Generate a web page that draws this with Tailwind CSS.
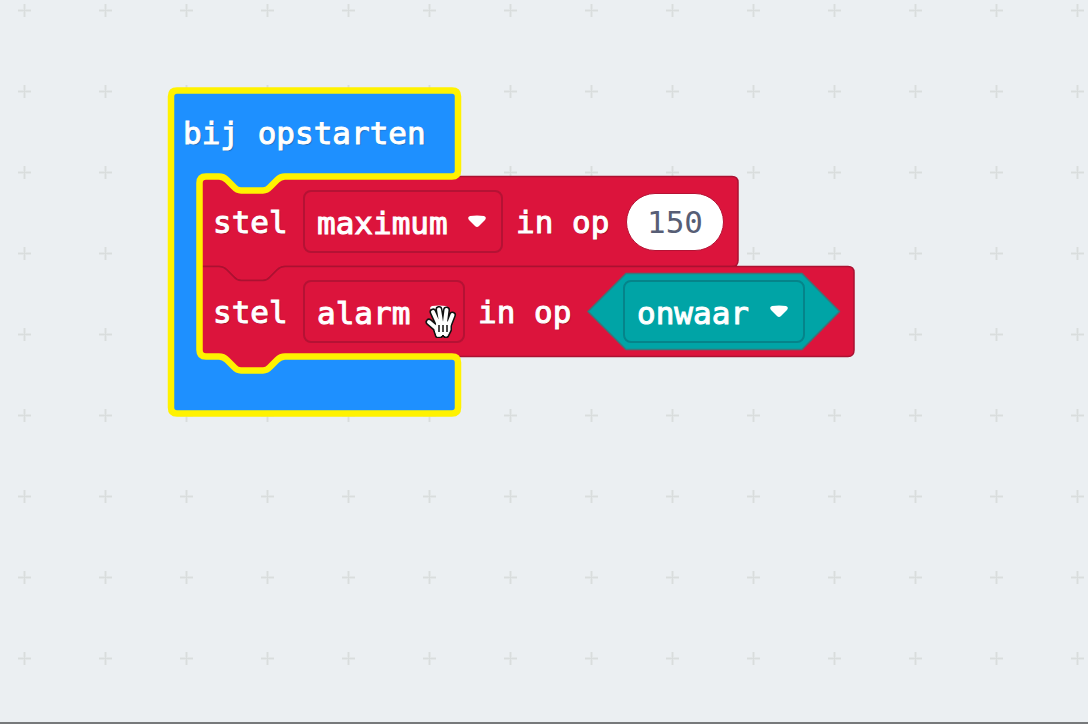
<!DOCTYPE html>
<html lang="nl">
<head>
<meta charset="utf-8">
<meta name="viewport" content="width=device-width, initial-scale=1">
<title>bij opstarten</title>
<script src="https://cdn.jsdelivr.net/npm/@tailwindcss/browser@4"></script>
</head>
<body class="bg-[#ebeff2]">
<main class="relative min-h-screen overflow-hidden border-b-2 border-[#77797b] font-['DejaVu_Sans_Mono',monospace] text-[31px] leading-9 text-white [-webkit-text-stroke:1px]">
  <!-- workspace grid -->
  <svg class="absolute inset-0 h-full w-full" aria-hidden="true">
    <defs>
      <pattern id="grid" width="81" height="81" patternUnits="userSpaceOnUse">
        <path d="M18 10.5h13M24.5 4v13" stroke="#e3e7e8" stroke-width="3"/>
        <path d="M18 10.5h13M24.5 4v13" stroke="#d9dddd" stroke-width="1"/>
      </pattern>
    </defs>
    <rect width="100%" height="100%" fill="url(#grid)"/>
  </svg>

  <section class="absolute left-[167px] top-[87px] w-[689px]" aria-label="bij opstarten">
    <!-- block outlines -->
    <svg class="absolute left-0 top-0" width="689" height="331" viewBox="167 87 689 331" fill="none" stroke-linejoin="round" aria-hidden="true">
      <path fill="#1e90ff" d="M177 90.500H452Q458 90.500 458 96.500V170.500Q458 176.500 452 176.500H300V200H200V356.500H452Q458 356.500 458 362.500V407.500Q458 413.500 452 413.500H177Q171 413.500 171 407.500V96.500Q171 90.500 177 90.500Z"/>
      <path fill="#dc143c" stroke="#ab1131" stroke-width="1.500" d="M207 176.500H219C223 176.500 225 178 227 180L234 187Q237 190.500 241 190.500H263Q267 190.500 270 187L277 180C279 178 281 176.500 285 176.500H732Q738 176.500 738 182.500V260.500Q738 266.500 732 266.500H285C281 266.500 279 268 277 270L270 277Q267 280.500 263 280.500H241Q237 280.500 234 277L227 270C225 268 223 266.500 219 266.500H200V183Q200 176.500 207 176.500Z"/>
      <path fill="#dc143c" stroke="#ab1131" stroke-width="1.500" d="M200 266.500H219C223 266.500 225 268 227 270L234 277Q237 280.500 241 280.500H263Q267 280.500 270 277L277 270C279 268 281 266.500 285 266.500H848Q854 266.500 854 272.500V350Q854 356.500 848 356.500H285C281 356.500 279 358 277 360L270 367Q267 370.500 263 370.500H241Q237 370.500 234 367L227 360C225 358 223 356.500 219 356.500H207Q200 356.500 200 350Z"/>
      <path stroke="#fff200" stroke-width="6.500" d="M177 90.500H452Q458 90.500 458 96.500V170.500Q458 176.500 452 176.500H285C281 176.500 279 178 277 180L270 187Q267 190.500 263 190.500H241Q237 190.500 234 187L227 180C225 178 223 176.500 219 176.500H206Q199.500 176.500 199.500 183V350Q199.500 356.500 206 356.500H219C223 356.500 225 358 227 360L234 367Q237 370.500 241 370.500H263Q267 370.500 270 367L277 360C279 358 281 356.500 285 356.500H452Q458 356.500 458 362.500V407.500Q458 413.500 452 413.500H177Q171 413.500 171 407.500V96.500Q171 90.500 177 90.500Z"/>
      <path fill="#00a4a6" stroke="#3d7479" stroke-width="1.500" d="M588 311.500L626 273.500H802L839.500 311.500L802 349.500H626Z"/>
    </svg>

    <div class="relative flex flex-col whitespace-nowrap [text-shadow:1px_1px_1px_#0005]">
      <h1 class="flex h-[90px] items-center pl-4 pt-0.5">bij opstarten</h1>

      <div class="flex h-[90px] items-center pb-px pl-[46px]">
        <label for="v1" class="w-[90px] pt-px">stel</label>
        <div class="relative">
          <select id="v1" class="block h-[63px] w-[200px] appearance-none rounded-lg border-2 border-[#b51234] bg-transparent pl-3 pt-0.5"><option>maximum</option></select>
          <svg class="pointer-events-none absolute right-4 top-[25px]" width="20" height="14" viewBox="0 0 20 14" aria-hidden="true"><path d="M3 1Q10 0 17 1Q20 2 18 5L12 11Q10 13 8 11L2 5Q0 2 3 1Z" fill="#fff"/></svg>
        </div>
        <label for="n1" class="ml-[13px] w-[110px] pt-px">in op</label>
        <input id="n1" value="150" class="h-[58px] w-[98px] rounded-full border border-[#b51234] bg-white text-center text-[#575e75] [-webkit-text-stroke:0] [text-shadow:none]">
      </div>

      <div class="flex h-[90px] items-center pb-px pl-[46px]">
        <label for="v2" class="w-[90px] pt-px">stel</label>
        <div class="relative">
          <select id="v2" class="block h-[63px] w-[162px] appearance-none rounded-lg border-2 border-[#b51234] bg-transparent pl-3 pt-0.5"><option>alarm</option></select>
          <svg class="pointer-events-none absolute right-4 top-[25px]" width="20" height="14" viewBox="0 0 20 14" aria-hidden="true"><path d="M3 1Q10 0 17 1Q20 2 18 5L12 11Q10 13 8 11L2 5Q0 2 3 1Z" fill="#fff"/></svg>
          <!-- grab cursor -->
          <svg class="pointer-events-none absolute left-[120px] top-[22px]" width="36" height="40" viewBox="0 0 36 40" fill="none" stroke-linecap="round" stroke-linejoin="round" aria-hidden="true">
            <g stroke="#111" stroke-width="7">
              <path d="M15 21L10 10M18 20L16 7.500M22 20L23.500 8M26 22L29.500 13M13 26L6 20"/>
              <path d="M14 34L12 28L14 20H27V28L24 34L22 34L20 32L18 34Z" fill="#111" stroke-width="4"/>
            </g>
            <g stroke="#fff" stroke-width="4">
              <path d="M15 21L10 10M18 20L16 7.500M22 20L23.500 8M26 22L29.500 13M13 26L6 20"/>
              <path d="M14 34L12 28L14 20H27V28L24 34L22 34L20 32L18 34Z" fill="#fff" stroke-width="1"/>
            </g>
            <path d="M16 23v7M20 23v7M24 23v7" stroke="#111" stroke-width="1.500" stroke-linecap="butt"/>
          </svg>
        </div>
        <label for="b1" class="ml-[13px] w-[145px] pt-px">in op</label>
        <div class="relative">
          <select id="b1" class="block h-[63px] w-[182px] appearance-none rounded-lg border-2 border-[#05848a] bg-transparent pl-3 pt-0.5"><option>onwaar</option></select>
          <svg class="pointer-events-none absolute right-4 top-[25px]" width="20" height="14" viewBox="0 0 20 14" aria-hidden="true"><path d="M3 1Q10 0 17 1Q20 2 18 5L12 11Q10 13 8 11L2 5Q0 2 3 1Z" fill="#fff"/></svg>
        </div>
      </div>
      <div class="h-[60px]"></div>
    </div>
  </section>
</main>
</body>
</html>
